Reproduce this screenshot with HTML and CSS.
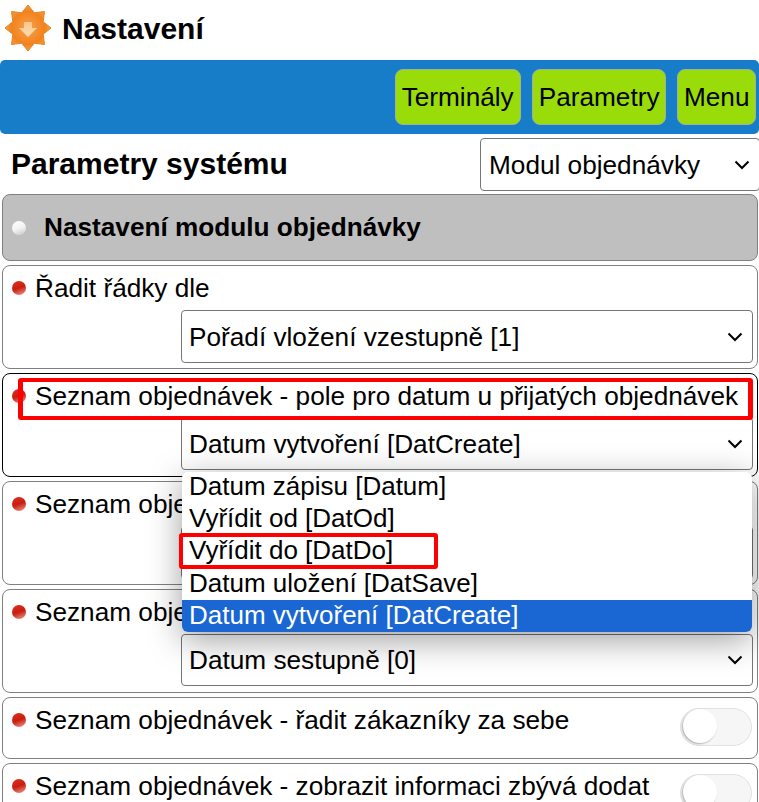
FILE: index.html
```html
<!DOCTYPE html>
<html lang="cs">
<head>
  <meta charset="UTF-8">
  <meta name="viewport" content="width=device-width, initial-scale=1.0">
  <title>Nastavení</title>
  <link rel="stylesheet" href="styles.css">
</head>
<body>
  <!-- hlavička -->
  <div class="head">
    <svg class="logo" width="48" height="48" viewBox="4 4 48 48">
      <defs>
        <radialGradient id="star" cx="0.5" cy="0.5" r="0.55">
          <stop offset="0" stop-color="#f8a050"/>
          <stop offset="0.65" stop-color="#f2831c"/>
          <stop offset="1" stop-color="#f7a748"/>
        </radialGradient>
        <linearGradient id="arrow" x1="0" y1="0" x2="0" y2="1">
          <stop offset="0" stop-color="#fbc78c"/>
          <stop offset="1" stop-color="#fddcb4"/>
        </linearGradient>
      </defs>
      <polygon fill="url(#star)" stroke="#e5842a" stroke-width="1" stroke-linejoin="round" points="28,5 34.3,12.8 44.5,11.5 43.2,21.7 51,28 43.2,34.3 44.5,44.5 34.3,43.2 28,51 21.7,43.2 11.5,44.5 12.8,34.3 5,28 12.8,21.7 11.5,11.5 21.7,12.8"/>
      <polygon fill="url(#arrow)" points="24,22 32,22 32,28 37,28 28,37 19,28 24,28"/>
    </svg>
    <h1 class="head-title">Nastavení</h1>
  </div>
  <div class="bar">
    <a class="btn">Terminály</a>
    <a class="btn">Parametry</a>
    <a class="btn">Menu</a>
  </div>

  <!-- parametry -->
  <div class="title-row">
    <h2 class="title">Parametry systému</h2>
    <select class="module-select">
      <option>Modul objednávky</option>
    </select>
  </div>

  <div class="list">
    <div class="group"><span class="dot dot-white"></span>Nastavení modulu objednávky</div>

    <div class="item">
      <div class="label"><span class="dot"></span>Řadit řádky dle</div>
      <select class="value"><option>Pořadí vložení vzestupně [1]</option></select>
    </div>

    <div class="item item-active">
      <div class="label"><span class="dot"></span>Seznam objednávek - pole pro datum u přijatých objednávek</div>
      <select class="value"><option>Datum vytvoření [DatCreate]</option></select>
    </div>

    <div class="item">
      <div class="label"><span class="dot"></span>Seznam obje</div>
      <select class="value"><option></option></select>
    </div>

    <div class="item">
      <div class="label"><span class="dot"></span>Seznam obje</div>
      <select class="value value-short"><option>Datum sestupně [0]</option></select>
    </div>

    <div class="item item-switch">
      <div class="label"><span class="dot"></span>Seznam objednávek - řadit zákazníky za sebe</div>
      <span class="switch"></span>
    </div>

    <div class="item item-switch">
      <div class="label"><span class="dot"></span>Seznam objednávek - zobrazit informaci zbývá dodat</div>
      <span class="switch"></span>
    </div>
  </div>

  <!-- otevřený seznam -->
  <ul class="dropdown">
    <li>Datum zápisu [Datum]</li>
    <li>Vyřídit od [DatOd]</li>
    <li>Vyřídit do [DatDo]</li>
    <li>Datum uložení [DatSave]</li>
    <li class="selected">Datum vytvoření [DatCreate]</li>
  </ul>

  <!-- červené rámečky -->
  <div class="mark mark-label"></div>
  <div class="mark mark-option"></div>
</body>
</html>
```

FILE: styles.css
```css
html, body {
  margin: 0;
  padding: 0;
  height: 802px;
  overflow: hidden;
}
body {
  position: relative;
  background: #fff;
  color: #000;
  font-family: "Liberation Sans", Arial, sans-serif;
  font-size: 26.2px;
}
.head {
  display: flex;
  align-items: center;
  height: 60px;
  padding-left: 4px;
}
.logo {
  margin-top: -4px;
}
.head-title {
  margin: -2px 0 0 10px;
  font-size: 30px;
  font-weight: bold;
}
.bar {
  display: flex;
  justify-content: flex-end;
  align-items: center;
  gap: 11px;
  height: 74px;
  padding-right: 3px;
  background: #187dc8;
  border-radius: 5px;
}
.btn {
  display: flex;
  align-items: center;
  justify-content: center;
  height: 54px;
  padding: 0 6px;
  background: #9adc0a;
  border: 1px solid #a0b0a0;
  border-radius: 8px;
}
.btn:last-child {
  padding: 0 5.5px;
}
.title-row {
  display: flex;
  justify-content: space-between;
  align-items: center;
  height: 53px;
  margin: 4px -1px 3px 11px;
}
.title {
  margin: -2px 0 0;
  font-size: 30px;
  font-weight: bold;
}
select {
  appearance: none;
  height: 53px;
  padding: 0 30px 0 7px;
  background-color: #fff;
  background-image: url("data:image/svg+xml,%3Csvg xmlns='http://www.w3.org/2000/svg' width='16' height='10' viewBox='0 0 16 10'%3E%3Cpath d='M1.5 1.5 8 8l6.5-6.5' fill='none' stroke='%23000' stroke-width='2'/%3E%3C/svg%3E");
  background-repeat: no-repeat;
  background-position: right 9px center;
  color: #000;
  border: 1px solid #767676;
  border-radius: 4px;
  font-family: inherit;
  font-size: 26.2px;
}
.module-select {
  width: 280px;
  padding-left: 8px;
}
.list {
  display: flex;
  flex-direction: column;
  gap: 4px;
  margin: 0 1px 0 2px;
}
.group {
  display: flex;
  align-items: center;
  height: 65px;
  background: #bfbfbf;
  border: 1px solid #808080;
  border-radius: 8px;
  font-weight: bold;
}
.group .dot {
  margin-right: 18px;
}
.dot {
  flex: none;
  display: inline-block;
  width: 14px;
  height: 14px;
  margin: 0 9px 0 9px;
  border-radius: 50%;
  background: linear-gradient(160deg, #e03020 0%, #c81e10 50%, #f0a090 100%);
}
.dot-white {
  background: linear-gradient(160deg, #fff 0%, #f4f4f4 50%, #c8c8c8 100%);
}
.item {
  box-sizing: border-box;
  height: 104px;
  padding: 5px 4px 5px 0;
  background: #fff;
  border: 1px solid #808080;
  border-radius: 8px;
}
.item-active {
  border-color: #000;
}
.label {
  display: flex;
  align-items: center;
  height: 34px;
  white-space: nowrap;
}
.value {
  display: block;
  width: 572px;
  margin: 5px 0 0 178px;
}
.item-active .value {
  margin-top: 4px;
}
.value-short {
  height: 52px;
}
.item-switch {
  height: 62px;
  display: flex;
  justify-content: space-between;
  align-items: flex-start;
}
.switch {
  flex: none;
  position: relative;
  box-sizing: border-box;
  width: 72px;
  height: 38px;
  margin: 5px 1px 0 0;
  background: #f6f6f6;
  border: 1px solid #e2e2e2;
  border-radius: 19px;
}
.switch::before {
  content: "";
  position: absolute;
  left: 2px;
  top: 0;
  width: 34px;
  height: 34px;
  background: #fff;
  border-radius: 50%;
  box-shadow: -1px 1px 2px rgba(0, 0, 0, 0.3);
}
.dropdown {
  position: absolute;
  left: 182px;
  top: 472px;
  width: 570px;
  margin: 0;
  padding: 0;
  list-style: none;
  background: #fff;
  border-radius: 6px;
  overflow: hidden;
  font-size: 26px;
  box-shadow: 0 8px 34px rgba(0, 0, 0, 0.38);
}
.dropdown li {
  height: 32px;
  line-height: 28px;
  padding-left: 7px;
}
.dropdown li:nth-child(n+4) {
  line-height: 30px;
}
.dropdown .selected {
  background: #1a66d2;
  color: #fff;
}
.mark {
  position: absolute;
  box-sizing: border-box;
  border: 4px solid #f00;
  border-radius: 3px;
}
.mark-label {
  left: 18px;
  top: 378px;
  width: 735px;
  height: 42px;
  border-width: 4px 5px;
}
.mark-option {
  left: 179px;
  top: 533px;
  width: 259px;
  height: 36px;
}
```
